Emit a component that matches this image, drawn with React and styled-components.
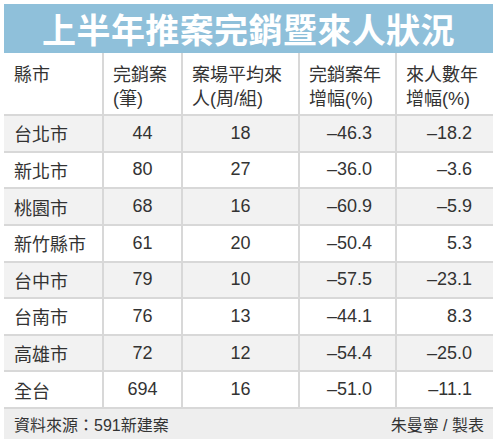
import React from 'react'
import styled, {createGlobalStyle} from 'styled-components'

const GlobalStyle = createGlobalStyle`
  html, body {
    margin: 0;
    padding: 0;
    background: #fff;
  }
  body {
    font-family: "Liberation Sans", "Noto Sans CJK TC", sans-serif;
    color: #333;
  }
`

const COLS = '98px 79px 117px 97px 98px'

const ROWS = [
  ['台北市', '44', '18', '–46.3', '–18.2'],
  ['新北市', '80', '27', '–36.0', '–3.6'],
  ['桃園市', '68', '16', '–60.9', '–5.9'],
  ['新竹縣市', '61', '20', '–50.4', '5.3'],
  ['台中市', '79', '10', '–57.5', '–23.1'],
  ['台南市', '76', '13', '–44.1', '8.3'],
  ['高雄市', '72', '12', '–54.4', '–25.0'],
  ['全台', '694', '16', '–51.0', '–11.1']
]

const HEADERS = [
  ['縣市'],
  ['完銷案', '(筆)'],
  ['案場平均來', '人(周/組)'],
  ['完銷案年', '增幅(%)'],
  ['來人數年', '增幅(%)']
]

// alignment and right padding for each column
const ALIGN = ['left', 'center', 'center', 'right', 'right']
const PAD_RIGHT = [0, 0, 0, 23, 21]

export default function App() {
  return (
    <Page>
      <GlobalStyle />
      <Title>上半年推案完銷暨來人狀況</Title>
      <HeadRow>
        {HEADERS.map((lines, i) =>
          <HeadCell key={i} first={i === 0}>
            {lines.map(l => <div key={l}>{l}</div>)}
          </HeadCell>
        )}
      </HeadRow>
      {ROWS.map((row, r) =>
        <Row key={row[0]} shaded={r % 2 === 0}>
          {row.map((v, i) =>
            <Cell key={i} first={i === 0} align={ALIGN[i]} padRight={PAD_RIGHT[i]}>{v}</Cell>
          )}
        </Row>
      )}
      <Footer>
        <span>資料來源：591新建案</span>
        <span>朱曼寧 / 製表</span>
      </Footer>
    </Page>
  )
}

const Page = styled.div`
  width: 489px;
  margin: 4px 0 0 4px;
`

const Title = styled.div`
  height: 49px;
  background: #8fc0da;
  color: #fff;
  font-family: "Noto Sans CJK TC", sans-serif;
  font-weight: 700;
  font-size: 34px;
  letter-spacing: 0.4px;
  display: flex;
  align-items: center;
  justify-content: center;
`

const HeadRow = styled.div`
  display: grid;
  grid-template-columns: ${COLS};
  height: 61px;
  background: #fff;
`

const HeadCell = styled.div`
  padding: 10px 0 0 ${p => p.first ? 10 : 9}px;
  font-size: 18px;
  line-height: 24px;
  border-left: ${p => p.first ? 'none' : '2px solid #d8d8d8'};
`

const Row = styled.div`
  display: grid;
  grid-template-columns: ${COLS};
  height: 36.625px;
  box-sizing: border-box;
  border-top: 2px solid #d8d8d8;
  background: ${p => p.shaded ? '#f2f2f2' : '#fff'};
`

const Cell = styled.div`
  display: flex;
  align-items: center;
  justify-content: ${p => p.align === 'left' ? 'flex-start' : p.align === 'right' ? 'flex-end' : 'center'};
  padding: 0 ${p => p.padRight}px 0 ${p => p.align === 'left' ? 10 : 0}px;
  font-size: 18px;
  border-left: ${p => p.first ? 'none' : '2px solid #d8d8d8'};
`

const Footer = styled.div`
  height: 32px;
  box-sizing: border-box;
  border-top: 2px solid #d8d8d8;
  background: #eeeeee;
  display: flex;
  align-items: center;
  justify-content: space-between;
  padding: 0 9px 0 10px;
  font-size: 16px;
`
